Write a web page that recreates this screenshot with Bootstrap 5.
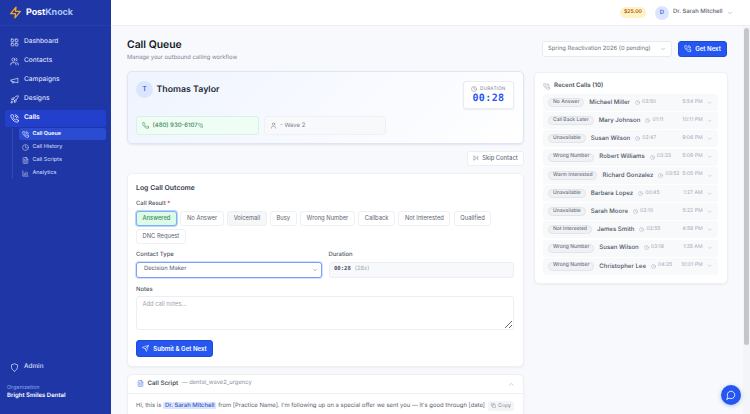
<!DOCTYPE html>
<html lang="en">
<head>
  <meta charset="UTF-8">
  <title>Call Queue - PostKnock</title>
  <link href="https://cdn.jsdelivr.net/npm/bootstrap@5.3.3/dist/css/bootstrap.min.css" rel="stylesheet">
  <style>
    html, body { height: 100%; overflow: hidden; }
    body { font-family: Inter, "Liberation Sans", sans-serif; font-size: 6.5px; color: #374151; background: #f8f9fc; text-rendering: geometricPrecision; }
    .ico { fill: none; stroke: currentColor; stroke-width: 2; stroke-linecap: round; stroke-linejoin: round; flex: none; }

    /* sidebar */
    .side { width: 111px; flex: none; background: #1f37a6; color: #d5defa; height: 100vh; }
    .side-logo { height: 26px; padding-left: 9px; gap: 4px; border-bottom: 1px solid #2340ad; }
    .side-logo b { font-size: 9px; font-weight: 700; color: #fff; letter-spacing: -.1px; }
    .side-logo b span { color: #a9c3f7; }
    .side-nav { padding: 7.5px 5px 0; }
    .side-item { height: 17px; margin-bottom: 2px; padding-left: 5px; gap: 5px; border-radius: 3px; font-size: 6.6px; font-weight: 500; color: #d5defa; text-decoration: none; }
    .side-item.on { background: #2340cd; color: #fff; font-weight: 600; margin-bottom: 1.5px; }
    .side-sub { margin-left: 7px; padding-left: 5.5px; border-left: 1px solid #2c4bc0; }
    .sub-item { height: 12px; margin-bottom: 1px; padding-left: 3.5px; gap: 3.5px; border-radius: 2.5px; font-size: 5.4px; font-weight: 500; color: #c4d0f5; text-decoration: none; }
    .sub-item.on { background: #2b4bd0; color: #fff; font-weight: 600; }
    .side-foot { padding: 0 7px 14px; }
    .side-admin { padding-left: 3px; gap: 5px; font-size: 6.4px; font-weight: 500; margin-bottom: 12px; color: #d5defa; }
    .org-label { font-size: 5.4px; color: #8fa8ee; line-height: 8px; }
    .org-name { font-size: 6px; font-weight: 600; color: #fff; line-height: 8px; }

    /* top bar */
    .top { height: 26px; flex: none; background: #fff; border-bottom: 1px solid #eceef3; padding-right: 17px; }
    .credit { background: #fef3c7; color: #b45309; font-size: 5.2px; font-weight: 600; padding: 0 4px; height: 10.5px; border-radius: 6px; margin-right: 9px; }
    .usr { width: 14px; height: 14px; border-radius: 50%; background: #dbe6fe; color: #2b55e6; font-size: 6px; font-weight: 500; margin-right: 4px; }
    .usr-name { font-size: 5.9px; color: #5b6472; font-weight: 500; margin-right: 4.5px; }

    /* page */
    .page { flex: 1; min-width: 0; overflow: hidden; }
    .scroll-track { width: 7px; flex: none; background: #f4f5f7; padding: 2px 1px 0; }
    .scroll-thumb { height: 317px; background: #c4c6ca; border-radius: 3px; }
    .page-in { padding: 12px 15px 0 16px; }
    .head { height: 33px; }
    .head h1 { font-size: 10.4px; font-weight: 600; color: #111827; margin: 0 0 2.5px; line-height: 13px; }
    .head p { font-size: 5.8px; color: #7b8494; margin: 0; line-height: 8px; }
    .camp { width: 130px; height: 16px; margin-right: 6px; margin-top: 3px; padding: 0 5px; background: #fff; border: 1px solid #e8eaef; border-radius: 3px; font-size: 5.8px; color: #6b7280; }
    .btn-go { background: #2557f0; color: #fff; border: 1px solid #1f49d8; border-radius: 3px; font-size: 6.1px; font-weight: 600; padding: 0; gap: 3.5px; }
    .btn-go:hover { background: #2557f0; color: #fff; }
    .go-top { width: 49px; height: 15.5px; margin-top: 3px; margin-right: 1px; }
    .cols { gap: 10px; }
    .col-l { width: 397px; flex: none; }
    .col-r { width: 194px; flex: none; margin-top: 1px; }
    .box { background: #fff; border: 1px solid #eef0f4; border-radius: 5px; box-shadow: 0 1px 2px rgba(17, 24, 39, .05); }

    /* current contact */
    .hero { height: 73px; padding: 9px 9px 8.5px 8px; background: linear-gradient(135deg, #eff4ff 0%, #fbfcff 75%, #fff 100%); border: 1px solid #dfe5f5; border-radius: 5px; box-shadow: 0 1px 2px rgba(30, 58, 168, .1); }
    .ava { width: 17px; height: 17px; border-radius: 50%; background: #dbe6fe; color: #2b55e6; font-size: 7px; font-weight: 500; }
    .who { font-size: 8.8px; font-weight: 600; color: #1f2937; margin-left: 3.5px; }
    .dur { width: 51px; height: 28px; background: #fff; border: 1px solid #e9ecf3; border-radius: 3px; box-shadow: 0 1px 2px rgba(17, 24, 39, .07); }
    .dur-l { font-size: 4.7px; letter-spacing: .2px; color: #7b8494; gap: 2.5px; line-height: 7px; }
    .dur-v { font-family: "DejaVu Sans Mono", monospace; font-size: 10px; font-weight: 700; color: #2557f0; line-height: 12px; letter-spacing: .4px; }
    .pill-row { gap: 5px; }
    .pill { width: 122.5px; height: 18.5px; border-radius: 3px; padding-left: 5px; font-size: 6px; gap: 3.5px; }
    .pill-ph { background: #f0fdf4; border: 1px solid #d3f5df; color: #3d8a5a; font-weight: 500; }
    .pill-wv { background: #f8f9fb; border: 1px solid #f0f1f4; color: #7b8494; }
    .btn-skip { width: 57px; height: 15px; background: #fff; border: 1px solid #eceef3; border-radius: 3px; font-size: 5.8px; font-weight: 500; color: #6b7280; gap: 3px; padding: 0; margin: 6.5px 0 7px auto; }

    /* outcome form */
    .outcome { height: 194px; padding: 9px 9px 9px 8px; }
    .outcome h2 { font-size: 6.9px; font-weight: 600; color: #374151; margin: 0 0 8px; line-height: 9px; }
    .lbl { display: block; font-size: 5.9px; font-weight: 500; color: #4b5563; line-height: 8px; margin-bottom: 2.5px; }
    .res { gap: 3.5px; width: 360px; margin-bottom: 7px; margin-top: 3px; }
    .res-btn { height: 15px; padding: 0 5.5px; background: #fff; border: 1px solid #eef0f4; border-radius: 3px; font-size: 5.8px; color: #5b6472; }
    .res-btn.on { background: #dcfce7; color: #3d8a5a; border-color: #7fb0f8; box-shadow: 0 0 0 1px #bcd4fb; font-weight: 500; }
    .res-btn.hov { background: #f6f7f9; }
    .fld-row { gap: 7px; margin-bottom: 8px; }
    .sel { height: 16px; padding: 0 7px; background: #fff; border: 1px solid #7f9ff5; border-radius: 3px; box-shadow: 0 0 0 1px #d3e0fc; font-size: 5.8px; color: #4b5563; }
    .ro { height: 16px; padding: 0 4.5px; gap: 4px; background: #f8f9fb; border: 1px solid #eceef3; border-radius: 3px; font-size: 5.8px; color: #4b5563; }
    .ro code { font-family: "DejaVu Sans Mono", monospace; font-size: 5.6px; font-weight: 700; color: #4b5563; }
    .ro span { color: #a4abb8; }
    .notes { display: block; width: 100%; min-height: 0; height: 34px; padding: 3px 5.5px; border: 1px solid #eceef3; border-radius: 3px; font-size: 5.8px; color: #4b5563; margin-bottom: 10px; }
    .notes::placeholder { color: #9ca3af; }
    .go-sub { width: 77px; height: 17px; gap: 4px; }

    /* script card */
    .script { margin-top: 7px; height: 70px; }
    .script-h { height: 19.5px; padding: 0 9px; gap: 3.5px; border-bottom: 1px solid #f0f1f4; font-size: 6.2px; color: #4b5563; font-weight: 600; }
    .script-h small { font-size: 5.8px; font-weight: 400; color: #8a92a0; }
    .script-b { padding: 7px 9px 0 8px; font-size: 5.9px; line-height: 10px; color: #5b6472; }
    .btn-copy { float: right; height: 9.5px; padding: 0 3px; gap: 2px; background: #f3f4f6; border-radius: 2.5px; font-size: 5.2px; color: #7b8494; }
    .hl { background: #dbe6fe; color: #3457c4; font-weight: 500; padding: 0 2px; border-radius: 1.5px; }

    /* recent calls */
    .recent { height: 212px; padding: 9px 9px 0 8px; }
    .recent h3 { font-size: 6.1px; font-weight: 600; color: #4b5563; margin: 0 0 4px; line-height: 8px; gap: 4px; height: 8px; }
    .rec-row { height: 17px; margin-bottom: 1.2px; padding: 0 5.5px 0 5px; background: #f8f9fb; border-radius: 3px; }
    .rec-tag { height: 9px; padding: 0 4px; background: #f0f1f4; border: 1px solid #e2e4ea; border-radius: 5px; font-size: 5px; font-weight: 500; color: #6b7280; white-space: nowrap; margin-right: 5px; }
    .rec-name { font-size: 6.1px; font-weight: 500; color: #4b5563; white-space: nowrap; margin-right: 5px; }
    .rec-dur { font-size: 5.1px; color: #a4abb8; gap: 2px; white-space: nowrap; }
    .rec-time { font-size: 5.1px; color: #a4abb8; margin-left: auto; padding-left: 1px; margin-right: 4.5px; white-space: nowrap; }

    .chat { position: fixed; left: 721px; top: 385px; width: 20px; height: 20px; border-radius: 50%; background: #2557f0; color: #fff; border: 0; padding: 0; box-shadow: 0 1px 4px rgba(37, 87, 240, .35); }
  </style>
</head>
<body>
<svg width="0" height="0" class="position-absolute">
  <symbol id="i-grid" viewBox="0 0 24 24"><rect x="3" y="3" width="7" height="7" rx="1.5"/><rect x="14" y="3" width="7" height="7" rx="1.5"/><rect x="3" y="14" width="7" height="7" rx="1.5"/><rect x="14" y="14" width="7" height="7" rx="1.5"/></symbol>
  <symbol id="i-users" viewBox="0 0 24 24"><path d="M16 21v-2a4 4 0 0 0-4-4H6a4 4 0 0 0-4 4v2"/><circle cx="9" cy="7" r="4"/><path d="M22 21v-2a4 4 0 0 0-3-3.87"/><path d="M16 3.13a4 4 0 0 1 0 7.75"/></symbol>
  <symbol id="i-mega" viewBox="0 0 24 24"><path d="m3 11 18-5v12L3 14v-3z"/><path d="M11.6 16.8a3 3 0 1 1-5.8-1.6"/></symbol>
  <symbol id="i-rocket" viewBox="0 0 24 24"><path d="M4.5 16.5c-1.5 1.26-2 5-2 5s3.74-.5 5-2c.71-.84.7-2.13-.09-2.91a2.18 2.18 0 0 0-2.91-.09z"/><path d="m12 15-3-3a22 22 0 0 1 2-3.95A12.88 12.88 0 0 1 22 2c0 2.72-.78 7.5-6 11a22.35 22.35 0 0 1-4 2z"/><path d="M9 12H4s.55-3.03 2-4c1.62-1.08 5 0 5 0"/><path d="M12 15v5s3.03-.55 4-2c1.08-1.62 0-5 0-5"/></symbol>
  <symbol id="i-phone" viewBox="0 0 24 24"><path d="M22 16.92v3a2 2 0 0 1-2.18 2 19.79 19.79 0 0 1-8.63-3.07 19.5 19.5 0 0 1-6-6 19.79 19.79 0 0 1-3.07-8.67A2 2 0 0 1 4.11 2h3a2 2 0 0 1 2 1.72 12.84 12.84 0 0 0 .7 2.81 2 2 0 0 1-.45 2.11L8.09 9.91a16 16 0 0 0 6 6l1.27-1.27a2 2 0 0 1 2.11-.45 12.84 12.84 0 0 0 2.81.7A2 2 0 0 1 22 16.92z"/></symbol>
  <symbol id="i-call" viewBox="0 0 24 24"><path d="M22 16.92v3a2 2 0 0 1-2.18 2 19.79 19.79 0 0 1-8.63-3.07 19.5 19.5 0 0 1-6-6 19.79 19.79 0 0 1-3.07-8.67A2 2 0 0 1 4.11 2h3a2 2 0 0 1 2 1.72 12.84 12.84 0 0 0 .7 2.81 2 2 0 0 1-.45 2.11L8.09 9.91a16 16 0 0 0 6 6l1.27-1.27a2 2 0 0 1 2.11-.45 12.84 12.84 0 0 0 2.81.7A2 2 0 0 1 22 16.92z"/><path d="M14.05 2a9 9 0 0 1 8 7.94"/><path d="M14.05 6A5 5 0 0 1 18 10"/></symbol>
  <symbol id="i-clock" viewBox="0 0 24 24"><circle cx="12" cy="12" r="10"/><path d="M12 6v6l4 2"/></symbol>
  <symbol id="i-file" viewBox="0 0 24 24"><path d="M14.5 2H6a2 2 0 0 0-2 2v16a2 2 0 0 0 2 2h12a2 2 0 0 0 2-2V7.5L14.5 2z"/><path d="M14 2v6h6"/><path d="M16 13H8"/><path d="M16 17H8"/><path d="M10 9H8"/></symbol>
  <symbol id="i-bars" viewBox="0 0 24 24"><path d="M3 3v18h18"/><path d="M8 17v-5"/><path d="M13 17V7"/><path d="M18 17v-8"/></symbol>
  <symbol id="i-shield" viewBox="0 0 24 24"><path d="M12 22s8-4 8-10V5l-8-3-8 3v7c0 6 8 10 8 10"/></symbol>
  <symbol id="i-user" viewBox="0 0 24 24"><path d="M19 21v-2a4 4 0 0 0-4-4H9a4 4 0 0 0-4 4v2"/><circle cx="12" cy="7" r="4"/></symbol>
  <symbol id="i-skip" viewBox="0 0 24 24"><path d="M5 4l10 8-10 8z"/><path d="M19 5v14"/></symbol>
  <symbol id="i-send" viewBox="0 0 24 24"><path d="m22 2-7 20-4-9-9-4Z"/><path d="M22 2 11 13"/></symbol>
  <symbol id="i-copy" viewBox="0 0 24 24"><rect x="8" y="8" width="14" height="14" rx="2"/><path d="M4 16c-1.1 0-2-.9-2-2V4c0-1.1.9-2 2-2h10c1.1 0 2 .9 2 2"/></symbol>
  <symbol id="i-down" viewBox="0 0 24 24"><path d="m6 9 6 6 6-6"/></symbol>
  <symbol id="i-up" viewBox="0 0 24 24"><path d="m18 15-6-6-6 6"/></symbol>
  <symbol id="i-chat" viewBox="0 0 24 24"><path d="M7.9 20A9 9 0 1 0 4 16.1L2 22Z"/></symbol>
</svg>

<div class="d-flex vh-100">
  <aside class="side d-flex flex-column">
    <div class="side-logo d-flex align-items-center">
      <svg width="13" height="15" viewBox="0 0 24 24" fill="none" stroke="#f5a623" stroke-width="2.4" stroke-linecap="round" stroke-linejoin="round"><path d="M13 2 3 14h9l-1 8 10-12h-9l1-8z"/></svg>
      <b>Post<span>Knock</span></b>
    </div>
    <nav class="side-nav flex-grow-1">
      <a href="#" class="side-item d-flex align-items-center"><svg class="ico" width="9" height="9"><use href="#i-grid"/></svg>Dashboard</a>
      <a href="#" class="side-item d-flex align-items-center"><svg class="ico" width="9" height="9"><use href="#i-users"/></svg>Contacts</a>
      <a href="#" class="side-item d-flex align-items-center"><svg class="ico" width="9" height="9"><use href="#i-mega"/></svg>Campaigns</a>
      <a href="#" class="side-item d-flex align-items-center"><svg class="ico" width="9" height="9"><use href="#i-rocket"/></svg>Designs</a>
      <a href="#" class="side-item on d-flex align-items-center"><svg class="ico" width="9" height="9"><use href="#i-call"/></svg>Calls</a>
      <div class="side-sub">
        <a href="#" class="sub-item on d-flex align-items-center"><svg class="ico" width="7" height="7"><use href="#i-call"/></svg>Call Queue</a>
        <a href="#" class="sub-item d-flex align-items-center"><svg class="ico" width="7" height="7"><use href="#i-clock"/></svg>Call History</a>
        <a href="#" class="sub-item d-flex align-items-center"><svg class="ico" width="7" height="7"><use href="#i-file"/></svg>Call Scripts</a>
        <a href="#" class="sub-item d-flex align-items-center"><svg class="ico" width="7" height="7"><use href="#i-bars"/></svg>Analytics</a>
      </div>
    </nav>
    <div class="side-foot">
      <div class="side-admin d-flex align-items-center"><svg class="ico" width="9" height="9"><use href="#i-shield"/></svg>Admin</div>
      <div class="org-label">Organization</div>
      <div class="org-name">Bright Smiles Dental</div>
    </div>
  </aside>

  <div class="d-flex flex-column flex-grow-1" style="min-width:0">
    <header class="top d-flex align-items-center justify-content-end">
      <span class="credit d-flex align-items-center">$25.00</span>
      <span class="usr d-flex align-items-center justify-content-center">D</span>
      <span class="usr-name">Dr. Sarah Mitchell</span>
      <svg class="ico" width="6" height="6" color="#8a92a0"><use href="#i-down"/></svg>
    </header>

    <div class="d-flex flex-grow-1" style="min-height:0">
    <main class="page">
      <div class="page-in">
        <div class="head d-flex align-items-start">
          <div class="flex-grow-1">
            <h1>Call Queue</h1>
            <p>Manage your outbound calling workflow</p>
          </div>
          <div class="camp d-flex align-items-center justify-content-between">Spring Reactivation 2026 (0 pending)<svg class="ico" width="6" height="6" color="#8a92a0"><use href="#i-down"/></svg></div>
          <button class="btn btn-go go-top d-flex align-items-center justify-content-center"><svg class="ico" width="7.5" height="7.5"><use href="#i-call"/></svg>Get Next</button>
        </div>

        <div class="cols d-flex align-items-start">
          <div class="col-l">
            <section class="hero d-flex flex-column justify-content-between">
              <div class="d-flex justify-content-between align-items-start">
                <div class="d-flex align-items-center">
                  <span class="ava d-flex align-items-center justify-content-center">T</span>
                  <span class="who">Thomas Taylor</span>
                </div>
                <div class="dur d-flex flex-column align-items-center justify-content-center">
                  <span class="dur-l d-flex align-items-center"><svg class="ico" width="6" height="6"><use href="#i-clock"/></svg>DURATION</span>
                  <span class="dur-v">00:28</span>
                </div>
              </div>
              <div class="pill-row d-flex">
                <div class="pill pill-ph d-flex align-items-center"><svg class="ico" width="7" height="7"><use href="#i-phone"/></svg><span>(480) 930-6107</span><svg class="ico" width="5" height="5" style="margin-left:-3px"><use href="#i-call"/></svg></div>
                <div class="pill pill-wv d-flex align-items-center"><svg class="ico" width="7" height="7"><use href="#i-user"/></svg><span>- Wave 2</span></div>
              </div>
            </section>

            <button class="btn btn-skip d-flex align-items-center justify-content-center"><svg class="ico" width="6" height="6"><use href="#i-skip"/></svg>Skip Contact</button>

            <section class="box outcome">
              <h2>Log Call Outcome</h2>
              <label class="lbl">Call Result <span class="text-danger">*</span></label>
              <div class="res d-flex flex-wrap">
                <button class="btn res-btn on">Answered</button>
                <button class="btn res-btn">No Answer</button>
                <button class="btn res-btn hov">Voicemail</button>
                <button class="btn res-btn">Busy</button>
                <button class="btn res-btn">Wrong Number</button>
                <button class="btn res-btn">Callback</button>
                <button class="btn res-btn">Not Interested</button>
                <button class="btn res-btn">Qualified</button>
                <button class="btn res-btn">DNC Request</button>
              </div>
              <div class="fld-row d-flex">
                <div class="flex-fill w-50">
                  <label class="lbl">Contact Type</label>
                  <div class="sel d-flex align-items-center justify-content-between">Decision Maker<svg class="ico" width="6" height="6" color="#6b7280" style="margin-right:-4px"><use href="#i-down"/></svg></div>
                </div>
                <div class="flex-fill w-50">
                  <label class="lbl">Duration</label>
                  <div class="ro d-flex align-items-center"><code>00:28</code><span>(28s)</span></div>
                </div>
              </div>
              <label class="lbl">Notes</label>
              <textarea class="notes form-control" placeholder="Add call notes..."></textarea>
              <button class="btn btn-go go-sub d-flex align-items-center justify-content-center"><svg class="ico" width="7" height="7"><use href="#i-send"/></svg>Submit &amp; Get Next</button>
            </section>

            <section class="box script">
              <div class="script-h d-flex align-items-center">
                <svg class="ico" width="7" height="7" color="#5f80ea"><use href="#i-file"/></svg>
                <span>Call Script</span><small>— dental_wave2_urgency</small>
                <svg class="ico ms-auto" width="6.5" height="6.5" color="#9ca3af"><use href="#i-up"/></svg>
              </div>
              <div class="script-b">
                <span class="btn-copy d-inline-flex align-items-center"><svg class="ico" width="5" height="5"><use href="#i-copy"/></svg>Copy</span>
                Hi, this is <span class="hl">Dr. Sarah Mitchell</span> from [Practice Name]. I'm following up on a special offer we sent you — it's good through [date]
              </div>
            </section>
          </div>

          <aside class="col-r">
            <section class="box recent" id="recent">
              <h3 class="d-flex align-items-center"><svg class="ico" width="7" height="7" color="#9ca3af"><use href="#i-call"/></svg>Recent Calls (10)</h3>
            </section>
          </aside>
        </div>
      </div>
    </main>
    <div class="scroll-track"><div class="scroll-thumb"></div></div>
    </div>
  </div>
</div>

<button class="chat d-flex align-items-center justify-content-center" aria-label="Chat"><svg class="ico" width="10" height="10"><use href="#i-chat"/></svg></button>

<script src="https://cdn.jsdelivr.net/npm/bootstrap@5.3.3/dist/js/bootstrap.bundle.min.js"></script>
<script>
  const calls = [
    ["No Answer", "Michael Miller", "03:50", "5:54 PM"],
    ["Call Back Later", "Mary Johnson", "01:11", "10:11 PM"],
    ["Unavailable", "Susan Wilson", "02:47", "9:06 PM"],
    ["Wrong Number", "Robert Williams", "03:33", "5:09 PM"],
    ["Warm Interested", "Richard Gonzalez", "03:52", "5:05 PM"],
    ["Unavailable", "Barbara Lopez", "00:45", "1:27 AM"],
    ["Unavailable", "Sarah Moore", "02:10", "5:22 PM"],
    ["Not Interested", "James Smith", "02:55", "4:58 PM"],
    ["Wrong Number", "Susan Wilson", "03:18", "1:35 AM"],
    ["Wrong Number", "Christopher Lee", "04:25", "10:01 PM"]
  ];
  const recent = document.getElementById("recent");
  calls.forEach(c => {
    recent.innerHTML += `
      <div class="rec-row d-flex align-items-center">
        <span class="rec-tag d-flex align-items-center">${c[0]}</span>
        <span class="rec-name">${c[1]}</span>
        <span class="rec-dur d-flex align-items-center"><svg class="ico" width="5" height="5"><use href="#i-clock"/></svg>${c[2]}</span>
        <span class="rec-time">${c[3]}</span>
        <svg class="ico" width="5.5" height="5.5" color="#a4abb8"><use href="#i-down"/></svg>
      </div>`;
  });
</script>
</body>
</html>
